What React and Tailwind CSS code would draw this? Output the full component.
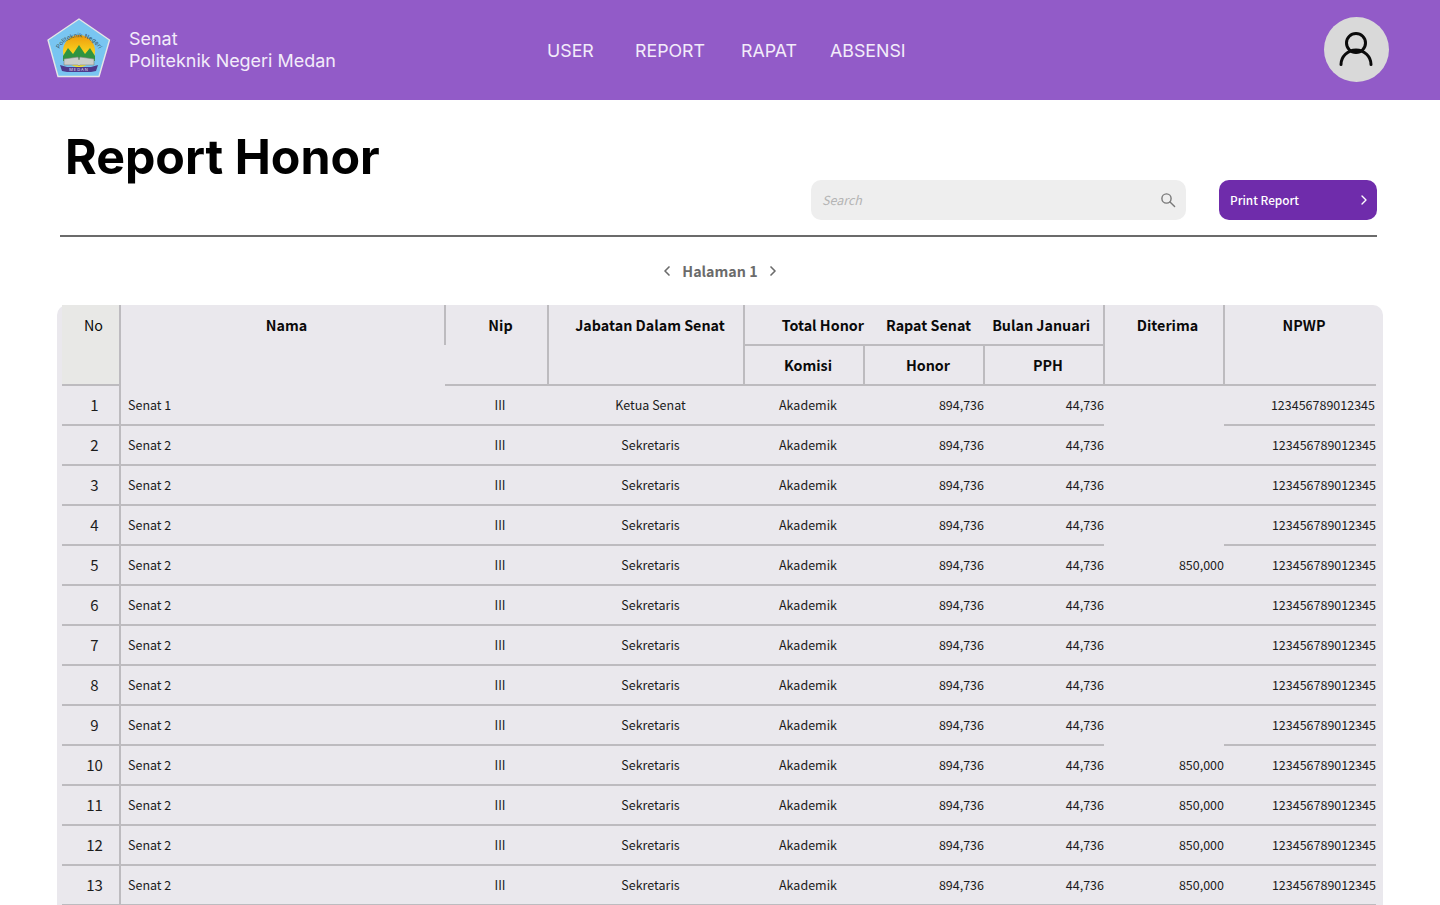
import React from 'react';
import { ChevronLeft, ChevronRight } from 'lucide-react';

const COLS =
  'grid grid-cols-[59px_324px_103px_196px_120px_120px_120px_120px_152px]';
// header dividers sit one pixel to the right of the body columns
const HEAD_COLS =
  'grid grid-cols-[59px_325px_103px_196px_120px_120px_120px_120px_151px]';

// rows where the Diterima cell has no line under it
const NO_LINE = [1, 4, 9];
const PAID = [5, 10, 11, 12, 13];

const rows = Array.from({ length: 13 }, (_, i) => ({
  no: i + 1,
  nama: i === 0 ? 'Senat 1' : 'Senat 2',
  jabatan: i === 0 ? 'Ketua Senat' : 'Sekretaris',
}));

const Logo = () => (
  <svg width="64" height="61" viewBox="0 0 64 61">
    <defs>
      <linearGradient id="sun" x1="0" y1="0" x2="0" y2="1">
        <stop offset="0" stopColor="#ee9a0c" />
        <stop offset="0.7" stopColor="#fbe224" />
      </linearGradient>
      <path id="arc" d="M10 37 A22.5 22.5 0 0 1 54 37" />
    </defs>
    <polygon
      points="32,1 62.5,22 52,58.5 11,58.5 1,22"
      fill="#79c5f1"
      stroke="#e6e6e6"
      strokeWidth="1.4"
      strokeLinejoin="round"
    />
    <circle cx="32" cy="33" r="16" fill="url(#sun)" />
    <polygon
      points="16,38 21,30 26,36 32,27 38,36 43,30 48,38 48,43 16,43"
      fill="#2f9440"
    />
    <path d="M17 41 L31 39 L32 42 L33 39 L47 41 L47 47 L33 47 L32 48 L31 47 L17 47 Z" fill="#c9cdc9" stroke="#7d837f" strokeWidth="0.6" />
    <path d="M13 47 L20 49 L44 49 L51 47 L49 53 L44 54 L20 54 L15 53 Z" fill="#4e3a8c" />
    <text x="32" y="53" textAnchor="middle" fontSize="4" fill="#e6e0f2" letterSpacing="1" fontFamily="Inter, sans-serif">
      MEDAN
    </text>
    <text fontSize="6" fill="#35525f" fontFamily="Inter, sans-serif">
      <textPath href="#arc" startOffset="50%" textAnchor="middle">
        Politeknik Negeri
      </textPath>
    </text>
  </svg>
);

const Navbar = () => (
  <header className="flex h-[100px] items-center bg-[#925bc8] font-[Inter,sans-serif] text-[#f3ecfa]">
    <div className="ml-[47px] mt-[-3px] flex w-[82px]">
      <Logo />
    </div>
    <div className="w-[418px] text-[17.95px] leading-[22px] mt-[-1px]">
      <p>Senat</p>
      <p>Politeknik Negeri Medan</p>
    </div>
    <nav className="flex text-[17.8px] mt-[2px]">
      <a className="w-[88px]">USER</a>
      <a className="w-[106px]">REPORT</a>
      <a className="w-[89px]">RAPAT</a>
      <a>ABSENSI</a>
    </nav>
    <div className="ml-auto mr-[51px] mt-[-1px] flex h-[65px] w-[65px] items-center justify-center rounded-full bg-[#d9d9d9]">
      <svg width="65" height="65" viewBox="0 0 65 65" fill="none" stroke="#0a0a0a" strokeWidth="3" strokeLinecap="round">
        <circle cx="32" cy="26" r="9.5" />
        <path d="M17 47.5 a15 14.5 0 0 1 30 0" />
      </svg>
    </div>
  </header>
);

const Toolbar = () => (
  <div className="ml-[60px] flex h-[137px] w-[1317px] border-b-2 border-[#6b6b6b] font-['Noto_Sans_CJK_JP',sans-serif]">
    <h1 className="ml-[5px] mt-[28px] h-[58px] font-[Inter,sans-serif] text-[48.3px] leading-[58px] font-bold text-black">
      Report Honor
    </h1>
    <div className="ml-auto mt-[80px] flex h-10 w-[375px] items-center justify-between rounded-[10px] bg-[#eeeeee] pl-[11px] pr-[10px]">
      <span className="text-[12.5px] text-[#b4b4b4] italic">Search</span>
      <svg width="16" height="16" viewBox="0 0 16 16" fill="none" stroke="#787878" strokeWidth="1.4" strokeLinecap="round">
        <circle cx="6.5" cy="6.5" r="4.6" />
        <path d="M10 10 L14.6 14.6" />
      </svg>
    </div>
    <button className="ml-[33px] mt-[80px] flex h-10 w-[158px] items-center justify-between rounded-[10px] bg-[#6f2cab] pl-[11px] pr-[5px] pb-[1px] text-[11.8px] font-medium text-white">
      Print Report
      <ChevronRight size={16} strokeWidth={2} />
    </button>
  </div>
);

const Pager = () => (
  <div className="flex h-[68px] items-center justify-center gap-[7px] font-['Noto_Sans_CJK_JP',sans-serif] text-[14.3px] font-bold text-[#6b6b6b]">
    <ChevronLeft size={16} strokeWidth={2.5} />
    <span>Halaman 1</span>
    <ChevronRight size={16} strokeWidth={2.5} />
  </div>
);

const Head = () => {
  const line = 'border-[#bdbbbf]';
  return (
    <div className={`${HEAD_COLS} grid-rows-[41px_40px] text-[14.3px] font-bold text-[#0a0a0a]`}>
      <div className={`row-span-2 flex justify-center border-r-2 border-b-2 bg-[#e8e8e6] pt-[9px] pl-[6px] font-normal ${line}`}>
        No
      </div>
      <div className="row-span-2">
        <div className={`flex h-10 items-center justify-center border-r-2 pl-[8px] ${line}`}>
          Nama
        </div>
      </div>
      <div className={`row-span-2 -ml-px flex justify-center border-r-2 border-b-2 pt-[9px] pl-[9px] ${line}`}>
        Nip
      </div>
      <div className={`row-span-2 flex justify-center border-r-2 border-b-2 pt-[9px] pl-2 ${line}`}>
        Jabatan Dalam Senat
      </div>
      <div className={`col-span-3 flex items-center border-r-2 border-b-2 pt-[1px] ${line}`}>
        <span className="w-[119px] text-right">Total Honor</span>
        <span className="ml-[22px]">Rapat Senat</span>
        <span className="ml-[21px]">Bulan Januari</span>
      </div>
      <div className={`row-span-2 flex justify-center border-r-2 border-b-2 pt-[9px] pl-[7px] ${line}`}>
        Diterima
      </div>
      <div className={`row-span-2 flex justify-center border-b-2 pt-[9px] pl-[7px] ${line}`}>
        NPWP
      </div>
      <div className={`flex items-center justify-center border-r-2 border-b-2 pl-2 ${line}`}>Komisi</div>
      <div className={`flex items-center justify-center border-r-2 border-b-2 pl-2 ${line}`}>Honor</div>
      <div className={`flex items-center justify-center border-r-2 border-b-2 pl-2 ${line}`}>PPH</div>
    </div>
  );
};

const Row = ({ row }) => {
  const cell = 'flex h-10 items-center border-b-2 border-[#bdbbbf]';
  return (
    <div className={`${COLS} text-[12.5px] text-[#1c1c1c]`}>
      <div className={`${cell} justify-center border-r-2 pl-[8px] text-[15px]`}>{row.no}</div>
      <div className={`${cell} pl-[7px]`}>{row.nama}</div>
      <div className={`${cell} justify-center pl-[7px]`}>III</div>
      <div className={`${cell} justify-center pl-[9px]`}>{row.jabatan}</div>
      <div className={`${cell} justify-center pl-2`}>Akademik</div>
      <div className={`${cell} justify-end`}>894,736</div>
      <div className={`${cell} justify-end`}>44,736</div>
      <div
        className={
          NO_LINE.includes(row.no)
            ? 'flex h-10 items-center justify-end'
            : `${cell} justify-end`
        }
      >
        {PAID.includes(row.no) ? '850,000' : ''}
      </div>
      <div className={`${cell} justify-end ${row.no === 1 ? 'mr-[1px]' : ''}`}>
        123456789012345
      </div>
    </div>
  );
};

const App = () => {
  return (
    <div className="h-[905px] overflow-hidden bg-white">
      <Navbar />
      <Toolbar />
      <Pager />
      <div className="ml-[57px] w-[1326px] rounded-t-[10px] bg-[#eae8ed] pl-[5px] font-['Noto_Sans_CJK_JP',sans-serif]">
        <Head />
        {rows.map((row) => (
          <Row key={row.no} row={row} />
        ))}
      </div>
    </div>
  );
};

export default App;
